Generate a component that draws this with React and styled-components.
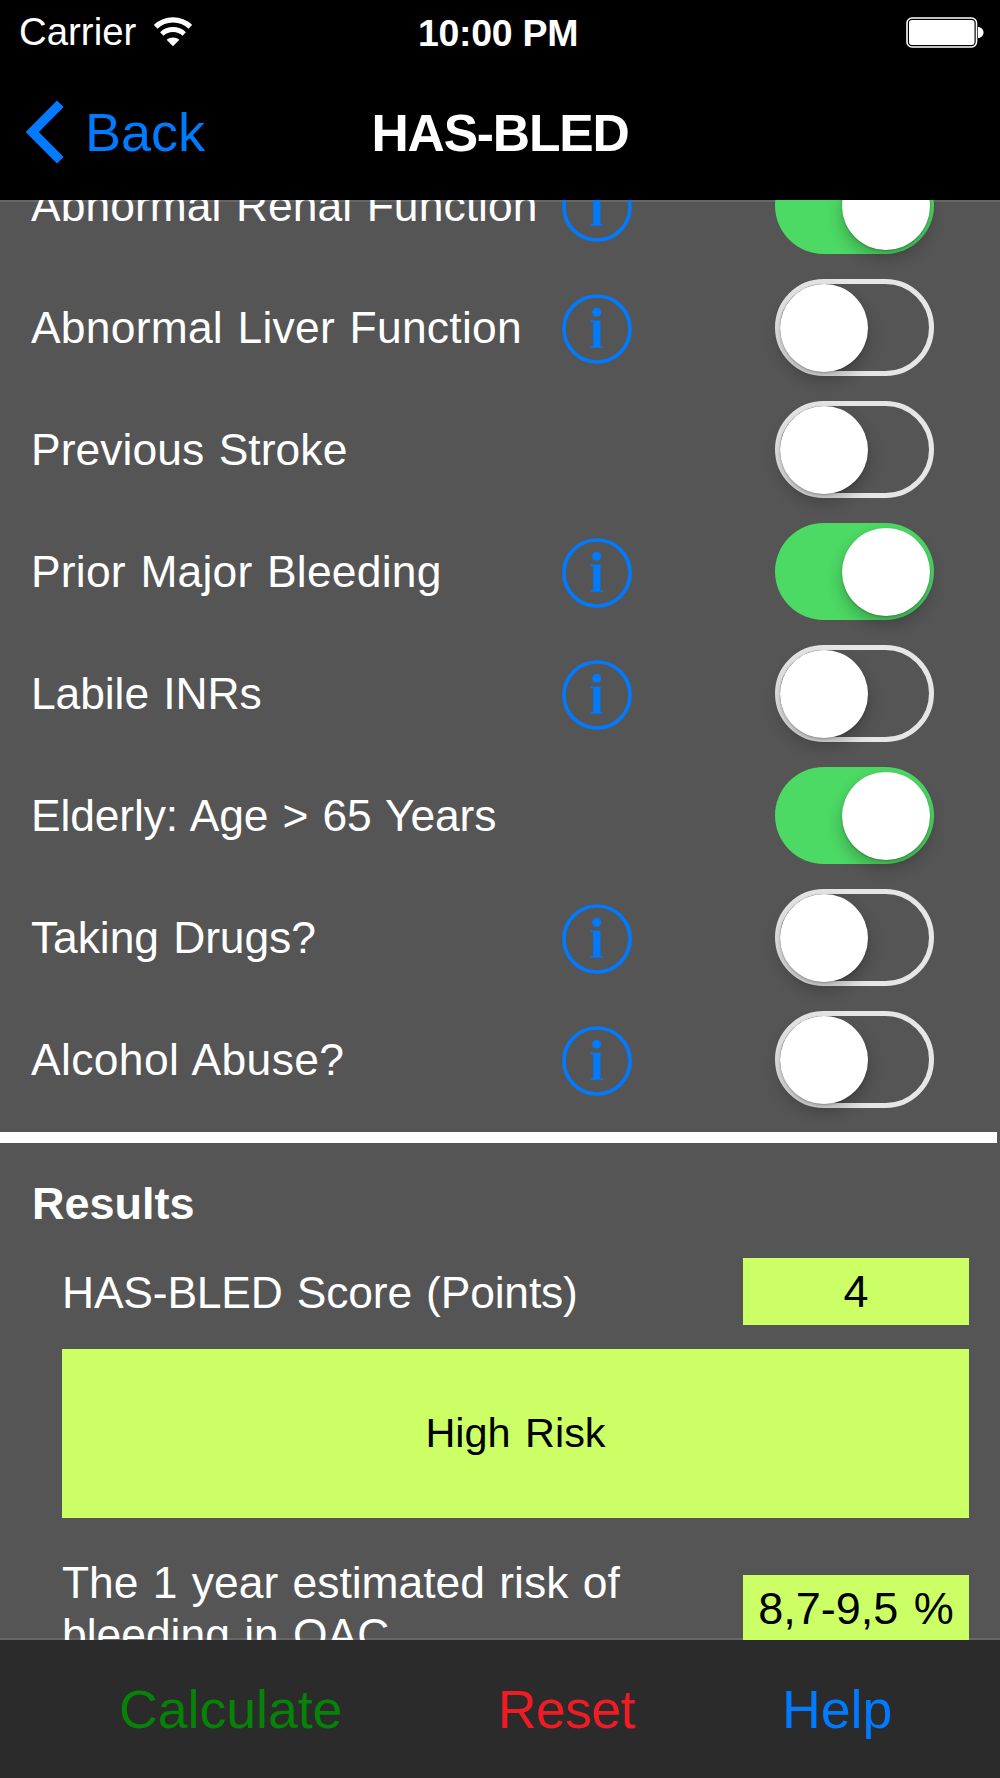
import React, { useState } from "react";
import styled, { createGlobalStyle } from "styled-components";

const GlobalStyle = createGlobalStyle`
  *, *::before, *::after { box-sizing: border-box; }
  body { margin: 0; background: #000; }
`;

const Screen = styled.div`
  width: 1000px;
  height: 1778px;
  display: flex;
  flex-direction: column;
  overflow: hidden;
  background: #555555;
  color: #fff;
  font-family: "Liberation Sans", Arial, sans-serif;
  font-size: 44.4px;
  white-space: nowrap;
`;

const StatusBar = styled.div`
  flex: none;
  height: 64px;
  padding: 0 16px 0 19px;
  display: grid;
  grid-template-columns: 1fr auto 1fr;
  align-items: center;
  background: #000;
  font-size: 38.4px;
  line-height: 44px;
`;

const Carrier = styled.div`
  display: flex;
  align-items: center;
  gap: 18px;
`;

const Clock = styled.div`
  margin-right: 7px;
  padding-top: 1px;
  font-size: 37.5px;
  font-weight: 700;
  letter-spacing: -0.3px;
`;

const BatteryIcon = styled.svg`
  justify-self: end;
  display: block;
`;

const NavBar = styled.header`
  flex: none;
  height: 136px;
  padding: 0 25px;
  display: grid;
  grid-template-columns: 1fr auto 1fr;
  align-items: center;
  background: #000;
`;

const BackButton = styled.button`
  padding: 0;
  border: 0;
  background: none;
  display: flex;
  align-items: center;
  gap: 21px;
  color: #007aff;
  font: inherit;
  font-size: 54px;
  line-height: 64px;
`;

const Title = styled.h1`
  margin: 0;
  padding-top: 1px;
  font-size: 51.6px;
  font-weight: 700;
  line-height: 60px;
  letter-spacing: -1.2px;
`;

const Content = styled.main`
  flex: 1;
  min-height: 0;
  overflow: hidden;
  box-shadow: inset 0 2px 0 #666, inset 0 -2px 0 #666;
`;

const List = styled.div`
  margin-top: -56px;
`;

const Row = styled.div`
  height: 122px;
  padding: 0 66px 0 31px;
  display: grid;
  grid-template-columns: 531px 1fr 159px;
  align-items: center;
`;

const Label = styled.span`
  padding-top: 2px;
  color: #fff;
  word-spacing: 2px;
  letter-spacing: ${(p) => p.$tracking || 0}px;
`;

const InfoButton = styled.button`
  width: 70px;
  height: 70px;
  margin-top: 3px;
  padding: 0;
  border: 0;
  background: none;
  grid-column: 2;
`;

const Track = styled.button`
  grid-column: 3;
  width: 159px;
  height: 97px;
  margin-top: 1px;
  padding: 0 ${(p) => (p.$on ? 4 : 0)}px 0 0;
  border: ${(p) => (p.$on ? "0" : "5px solid #e6e6e6")};
  border-radius: 49px;
  display: flex;
  align-items: center;
  justify-content: ${(p) => (p.$on ? "flex-end" : "flex-start")};
  background: ${(p) => (p.$on ? "#4cd964" : "transparent")};
`;

const Knob = styled.span`
  flex: none;
  width: 88px;
  height: 88px;
  margin-left: -0.5px;
  border-radius: 50%;
  background: #fff;
  box-shadow: 0 1px 2px rgba(0, 0, 0, 0.25), 0 8px 16px rgba(0, 0, 0, 0.24);
`;

const Divider = styled.div`
  width: 997px;
  height: 11px;
  margin-top: 12px;
  background: #fff;
`;

const SectionTitle = styled.h2`
  margin: 31px 0 0 32px;
  font-size: 45px;
  font-weight: 700;
  line-height: 60px;
`;

const ResultRow = styled.div`
  margin-top: ${(p) => p.$gap}px;
  padding: 0 31px 0 62px;
  display: flex;
  align-items: center;
  justify-content: space-between;
  line-height: 52px;
`;

const Value = styled.div`
  width: 226px;
  height: 67px;
  padding-top: 1px;
  display: flex;
  align-items: center;
  justify-content: center;
  background: #ccff66;
  color: #000;
  font-size: 45px;
  word-spacing: 3px;
`;

const Verdict = styled.div`
  height: 169px;
  margin: 24px 31px 0 62px;
  display: flex;
  align-items: center;
  justify-content: center;
  background: #ccff66;
  color: #000;
  font-size: 41.4px;
  word-spacing: 3px;
`;

const Toolbar = styled.footer`
  flex: none;
  height: 138px;
  padding-left: 119px;
  display: grid;
  grid-template-columns: 379px 284px auto;
  align-items: center;
  justify-items: start;
  background: #2b2b2b;
`;

const ToolbarButton = styled.button`
  padding: 0;
  border: 0;
  background: none;
  color: ${(p) => p.$color};
  font: inherit;
  font-size: 53.6px;
  line-height: 64px;
  letter-spacing: ${(p) => p.$tracking || 0}px;
`;

const Wifi = () => (
  <svg width="38" height="30" viewBox="0 0 38 30" fill="none" stroke="#fff">
    <path d="M1.7 9.8a25 25 0 0 1 34.6 0" strokeWidth="5.2" />
    <path d="M7.8 17a16.4 16.4 0 0 1 22.4 0" strokeWidth="5" />
    <path d="M19 29.2l-6.4-6.4a10 10 0 0 1 12.8 0z" fill="#fff" stroke="none" />
  </svg>
);

const Battery = () => (
  <BatteryIcon width="78" height="31" viewBox="0 0 78 31">
    <rect x="1" y="1" width="69.5" height="29" rx="5" fill="none" stroke="#fff" strokeWidth="1.6" />
    <rect x="3" y="3" width="65.5" height="25" rx="3" fill="#fff" />
    <path d="M72 10c3 0 5.5 2.4 5.5 5.5S75 21 72 21z" fill="#fff" />
  </BatteryIcon>
);

const Chevron = () => (
  <svg width="39" height="64" viewBox="0 0 39 64" fill="none">
    <path d="M35.3 3.8L7.3 32l28 28.2" stroke="#007aff" strokeWidth="9.4" />
  </svg>
);

const InfoIcon = () => (
  <svg width="70" height="70" viewBox="0 0 70 70" display="block">
    <circle cx="35" cy="35" r="33" fill="none" stroke="#007aff" strokeWidth="3.7" />
    <circle cx="34.7" cy="18.2" r="4.5" fill="#007aff" />
    <path d="M28.4 26.6h10v25.6h2.7v1.5h-12.7v-1.5h2.8v-24.1h-2.8z" fill="#007aff" />
  </svg>
);

const FACTORS = [
  { label: "Abnormal Renal Function", info: true, on: true, tracking: 0.07 },
  { label: "Abnormal Liver Function", info: true, on: false, tracking: 0.25 },
  { label: "Previous Stroke", info: false, on: false, tracking: 0.07 },
  { label: "Prior Major Bleeding", info: true, on: true, tracking: 0.22 },
  { label: "Labile INRs", info: true, on: false, tracking: -0.08 },
  { label: "Elderly: Age > 65 Years", info: false, on: true, tracking: -0.13 },
  { label: "Taking Drugs?", info: true, on: false, tracking: -0.07 },
  { label: "Alcohol Abuse?", info: true, on: false, tracking: 0.38 },
];

export default function App() {
  const [states, setStates] = useState(FACTORS.map((f) => f.on));
  const toggle = (i) => setStates((s) => s.map((v, j) => (j === i ? !v : v)));

  return (
    <>
      <GlobalStyle />
      <Screen>
        <StatusBar>
          <Carrier>
            Carrier
            <Wifi />
          </Carrier>
          <Clock>10:00 PM</Clock>
          <Battery />
        </StatusBar>
        <NavBar>
          <BackButton>
            <Chevron />
            Back
          </BackButton>
          <Title>HAS-BLED</Title>
        </NavBar>
        <Content>
          <List>
            {FACTORS.map((f, i) => (
              <Row key={f.label}>
                <Label $tracking={f.tracking}>{f.label}</Label>
                {f.info && (
                  <InfoButton>
                    <InfoIcon />
                  </InfoButton>
                )}
                <Track $on={states[i]} onClick={() => toggle(i)}>
                  <Knob />
                </Track>
              </Row>
            ))}
          </List>
          <Divider />
          <SectionTitle>Results</SectionTitle>
          <ResultRow $gap={24}>
            <Label $tracking={-0.17}>HAS-BLED Score (Points)</Label>
            <Value>4</Value>
          </ResultRow>
          <Verdict>High Risk</Verdict>
          <ResultRow $gap={37}>
            <Label>
              The 1 year estimated risk of
              <br />
              bleeding in OAC
            </Label>
            <Value>8,7-9,5 %</Value>
          </ResultRow>
        </Content>
        <Toolbar>
          <ToolbarButton $color="#068206">Calculate</ToolbarButton>
          <ToolbarButton $color="#f01c24" $tracking={-0.6}>Reset</ToolbarButton>
          <ToolbarButton $color="#007aff">Help</ToolbarButton>
        </Toolbar>
      </Screen>
    </>
  );
}
